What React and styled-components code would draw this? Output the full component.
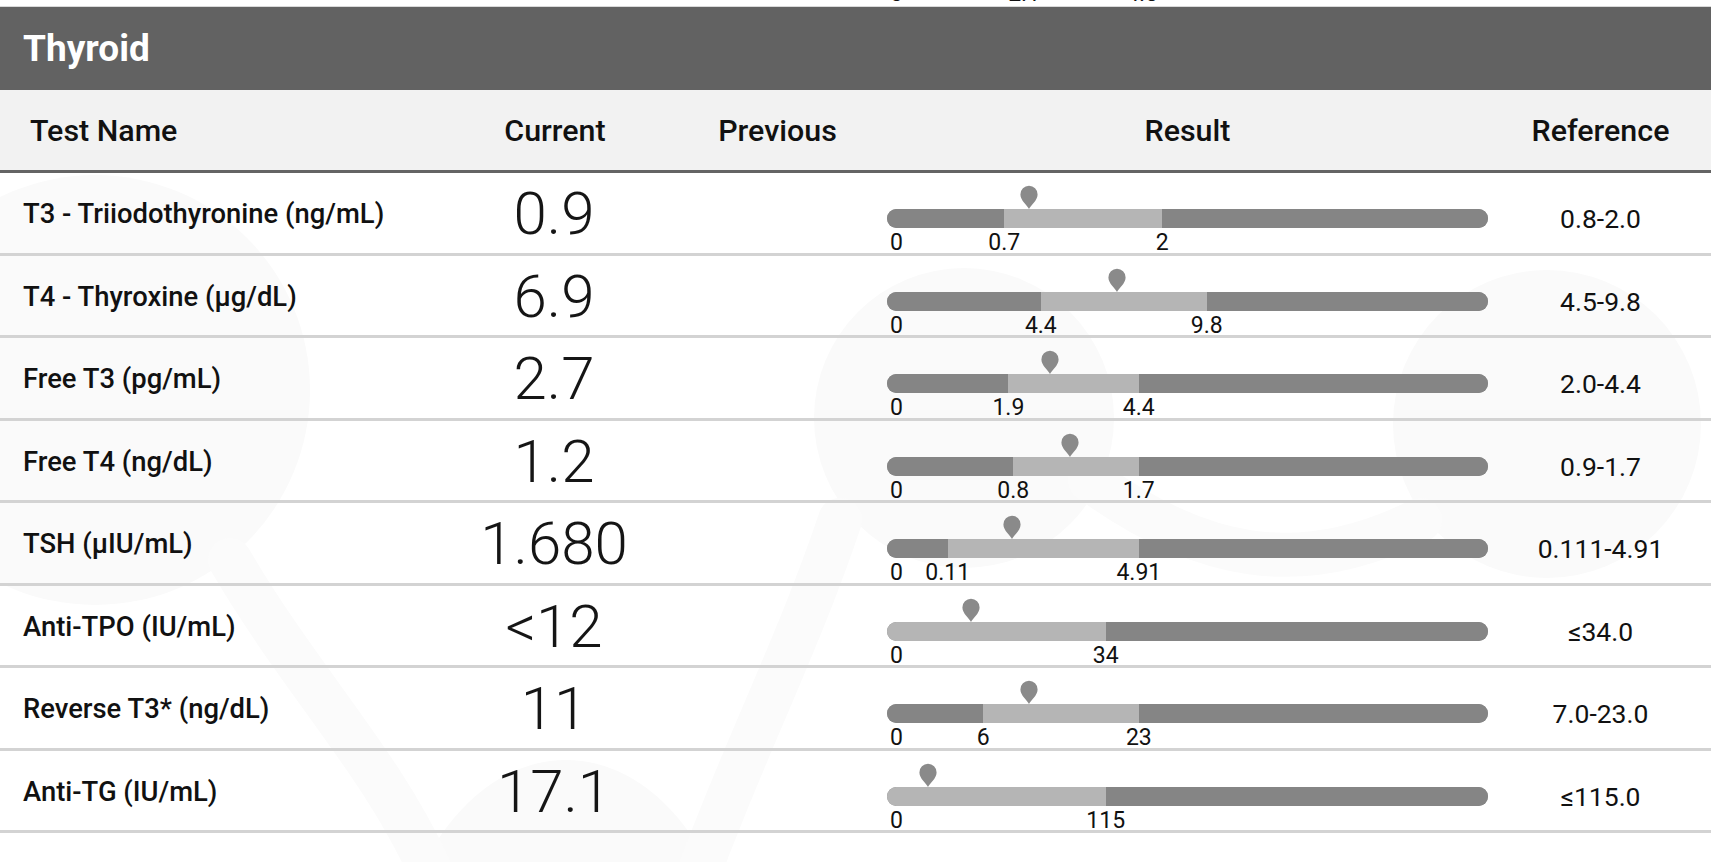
import React from 'react';
import styled, { createGlobalStyle } from 'styled-components';

const GlobalStyle = createGlobalStyle`
    html, body {
        margin: 0;
        padding: 0;
        background: #fff;
    }
    body {
        font-family: Roboto, "Liberation Sans", Arial, sans-serif;
        color: #111;
    }
`;

const COLUMNS = '440px 230px 215px 605px 221px';

const Page = styled.div`
    position: relative;
    width: 1734px;
    height: 862px;
    overflow: hidden;
    background: #fff;
`;

const Watermark = styled.svg`
    position: absolute;
    left: 0;
    top: 0;
    width: 1734px;
    height: 862px;
    pointer-events: none;
`;

const Table = styled.div`
    position: relative;
    width: 1711px;
`;

const PrevTail = styled.div`
    display: grid;
    grid-template-columns: ${COLUMNS};
    height: 6px;
    overflow: hidden;
    border-bottom: 1px solid #d9d9d9;
`;

const SectionTitle = styled.div`
    height: 83px;
    display: flex;
    align-items: center;
    padding-left: 23px;
    background: #626262;
    color: #fff;
    font-size: 37px;
    font-weight: 700;
`;

const HeadRow = styled.div`
    display: grid;
    grid-template-columns: ${COLUMNS};
    height: 80px;
    align-items: center;
    background: #f2f2f2;
    border-bottom: 3px solid #646464;
    font-size: 30.4px;
    font-weight: 500;
    color: #111;
`;

const HeadCell = styled.div`
    text-align: ${(p) => (p.$left ? 'left' : 'center')};
    padding-left: ${(p) => (p.$left ? '30px' : '0')};
`;

const Row = styled.div`
    display: grid;
    grid-template-columns: ${COLUMNS};
    height: 79.5px;
    align-items: center;
    border-bottom: 3px solid #d3d3d3;
`;

const TestName = styled.div`
    padding-left: 23px;
    font-size: 27.4px;
    font-weight: 500;
    color: #111;
    white-space: nowrap;
`;

const Current = styled.div`
    text-align: center;
    font-size: 60px;
    font-weight: 300;
    line-height: 1;
    color: #151515;
    padding-right: 2px;
`;

const Empty = styled.div``;

const ResultCell = styled.div`
    align-self: stretch;
    display: flex;
    flex-direction: column;
    padding: 12px 2px 0;
`;

const MarkerTrack = styled.div`
    position: relative;
    height: 24px;
`;

const Pin = styled.svg`
    position: absolute;
    top: 0;
    width: 20px;
    height: 24px;
    transform: translateX(-50%);
`;

const Bar = styled.div`
    display: flex;
    height: 19px;
    border-radius: 10px;
    overflow: hidden;
    background: #858585;
`;

const Segment = styled.div`
    height: 100%;
    background: ${(p) => (p.$normal ? '#b5b5b5' : '#858585')};
`;

const Labels = styled.div`
    position: relative;
    height: 24px;
    margin-top: 3px;
    font-size: 23px;
    line-height: 24px;
    color: #111;
`;

const Label = styled.span`
    position: absolute;
    top: 0;
    white-space: nowrap;
    transform: ${(p) => (p.$start ? 'translateX(3px)' : 'translateX(-50%)')};
`;

const TailLabels = styled(Labels)`
    margin-top: -18px;
    padding: 0 2px;
`;

const Reference = styled.div`
    align-self: start;
    padding-top: 31px;
    text-align: center;
    font-size: 26.5px;
    line-height: 30px;
    color: #111;
`;

const rows = [
    { name: 'T3 - Triiodothyronine (ng/mL)', value: '0.9', low: 0.195, high: 0.458, marker: 0.236, lowLabel: '0.7', highLabel: '2', ref: '0.8-2.0' },
    { name: 'T4 - Thyroxine (µg/dL)', value: '6.9', low: 0.256, high: 0.532, marker: 0.383, lowLabel: '4.4', highLabel: '9.8', ref: '4.5-9.8' },
    { name: 'Free T3 (pg/mL)', value: '2.7', low: 0.202, high: 0.419, marker: 0.272, lowLabel: '1.9', highLabel: '4.4', ref: '2.0-4.4' },
    { name: 'Free T4 (ng/dL)', value: '1.2', low: 0.21, high: 0.419, marker: 0.304, lowLabel: '0.8', highLabel: '1.7', ref: '0.9-1.7' },
    { name: 'TSH (µIU/mL)', value: '1.680', low: 0.101, high: 0.419, marker: 0.208, lowLabel: '0.11', highLabel: '4.91', ref: '0.111-4.91' },
    { name: 'Anti-TPO (IU/mL)', value: '<12', low: 0, high: 0.364, marker: 0.14, highLabel: '34', ref: '≤34.0' },
    { name: 'Reverse T3* (ng/dL)', value: '11', low: 0.16, high: 0.419, marker: 0.236, lowLabel: '6', highLabel: '23', ref: '7.0-23.0' },
    { name: 'Anti-TG (IU/mL)', value: '17.1', low: 0, high: 0.364, marker: 0.068, highLabel: '115', ref: '≤115.0' }
];

const pct = (f) => `${(f * 100).toFixed(2)}%`;

const Marker = ({ at }) => (
    <Pin viewBox="0 0 20 24" style={{ left: pct(at) }}>
        <path d="M10 24 C8.6 20.5 1.4 15.5 1.4 9.4 A8.6 8.6 0 0 1 18.6 9.4 C18.6 15.5 11.4 20.5 10 24 Z" fill="#8a8a8a" />
    </Pin>
);

const RangeBar = ({ low, high, marker, lowLabel, highLabel }) => (
    <ResultCell>
        <MarkerTrack>
            <Marker at={marker} />
        </MarkerTrack>
        <Bar>
            <Segment style={{ width: pct(low) }} />
            <Segment $normal style={{ width: pct(high - low) }} />
            <Segment style={{ flex: 1 }} />
        </Bar>
        <Labels>
            <Label $start>0</Label>
            {lowLabel && <Label style={{ left: pct(low) }}>{lowLabel}</Label>}
            <Label style={{ left: pct(high) }}>{highLabel}</Label>
        </Labels>
    </ResultCell>
);

// faint logo drawn behind the table
const BackgroundMark = () => (
    <Watermark viewBox="0 0 1734 862">
        <g fill="#fafafa">
            <circle cx="964" cy="418" r="150" />
            <circle cx="1547" cy="424" r="154" />
            <circle cx="95" cy="390" r="215" />
            <ellipse cx="566" cy="1010" rx="175" ry="250" />
        </g>
        <g fill="none" stroke="#fbfbfb" strokeWidth="44" strokeLinecap="round">
            <path d="M230 560 C 300 680, 380 760, 430 870" />
            <path d="M840 520 C 800 640, 740 760, 700 870" />
            <path d="M1090 480 C 1200 560, 1300 580, 1420 520" />
        </g>
    </Watermark>
);

export default function App() {
    return (
        <Page>
            <GlobalStyle />
            <BackgroundMark />
            <Table>
                <PrevTail>
                    <Empty />
                    <Empty />
                    <Empty />
                    <TailLabels>
                        <Label $start>0</Label>
                        <Label style={{ left: '23%' }}>2.1</Label>
                        <Label style={{ left: '42.5%' }}>4.8</Label>
                    </TailLabels>
                    <Empty />
                </PrevTail>
                <SectionTitle>Thyroid</SectionTitle>
                <HeadRow>
                    <HeadCell $left>Test Name</HeadCell>
                    <HeadCell>Current</HeadCell>
                    <HeadCell>Previous</HeadCell>
                    <HeadCell>Result</HeadCell>
                    <HeadCell>Reference</HeadCell>
                </HeadRow>
                {rows.map((r) => (
                    <Row key={r.name}>
                        <TestName>{r.name}</TestName>
                        <Current>{r.value}</Current>
                        <Empty />
                        <RangeBar {...r} />
                        <Reference>{r.ref}</Reference>
                    </Row>
                ))}
            </Table>
        </Page>
    );
}
